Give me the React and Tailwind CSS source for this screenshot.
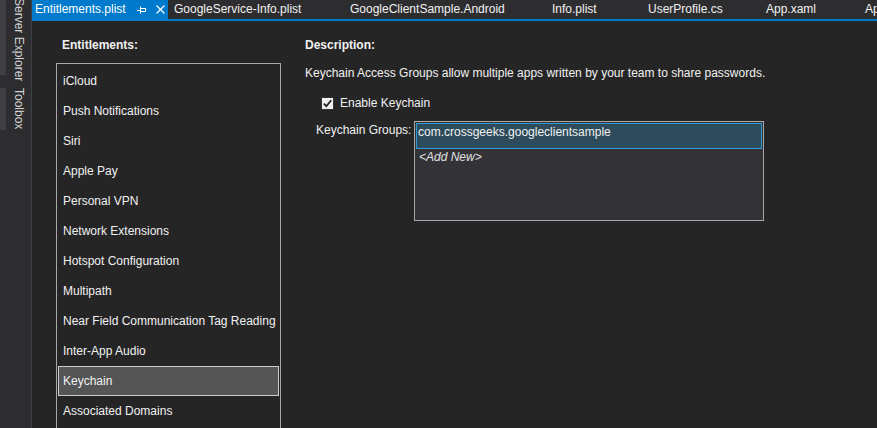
import React from 'react'

const tabs = [
  { name: 'GoogleService-Info.plist', w: 'w-[176px]' },
  { name: 'GoogleClientSample.Android', w: 'w-[202px]' },
  { name: 'Info.plist', w: 'w-[96px]' },
  { name: 'UserProfile.cs', w: 'w-[118px]' },
  { name: 'App.xaml', w: 'w-[99px]' },
  { name: 'App.xaml.cs', w: 'w-[90px]' },
]

const entitlements = [
  'iCloud',
  'Push Notifications',
  'Siri',
  'Apple Pay',
  'Personal VPN',
  'Network Extensions',
  'Hotspot Configuration',
  'Multipath',
  'Near Field Communication Tag Reading',
  'Inter-App Audio',
  'Keychain',
  'Associated Domains',
]

function PinIcon() {
  return (
    <svg width="10" height="8" viewBox="0 0 10 8" fill="none" stroke="#ffffff" strokeWidth="1">
      <path d="M0 4.5H3" />
      <path d="M3.5 0.5V7.5" />
      <rect x="3.5" y="2.5" width="5" height="3" />
      <path d="M4 2.5H9" />
    </svg>
  )
}

function CloseIcon() {
  return (
    <svg width="9" height="9" viewBox="0 0 9 9" fill="none" stroke="#ffffff" strokeWidth="1.2">
      <path d="M0.5 0.5L8.5 8.5M8.5 0.5L0.5 8.5" />
    </svg>
  )
}

function SideTab({ label, className }) {
  return (
    <div className={`flex ${className}`}>
      <div className="w-[6px] bg-[#3f3f46]" />
      <div className="ml-[6px] [writing-mode:vertical-rl] text-[12px] leading-[14px] text-[#d4d4d4] whitespace-nowrap">
        {label}
      </div>
    </div>
  )
}

export default function App() {
  return (
    <div
      className="flex h-[428px] w-[877px] overflow-hidden bg-[#252526] text-[#f1f1f1] text-[12px]"
      style={{ fontFamily: '"Liberation Sans", Arial, sans-serif' }}
    >
      {/* Auto-hide side tabs */}
      <div className="w-[32px] shrink-0 bg-[#2d2d30] border-r border-[#3f3f46] flex flex-col overflow-hidden">
        <SideTab label="Server Explorer" className="h-[77px] -mt-[2px]" />
        <SideTab label="Toolbox" className="h-[42px] mt-[13px]" />
      </div>

      <div className="flex-1 flex flex-col min-w-0">
        {/* Document tabs */}
        <div className="h-[21px] shrink-0 bg-[#2d2d30] border-b-2 border-[#007acc] flex items-stretch overflow-hidden whitespace-nowrap">
          <div className="w-[136px] shrink-0 bg-[#007acc] text-white flex items-center pl-[3px]">
            <span className="leading-[19px]">Entitlements.plist</span>
            <span className="ml-[11px] flex items-center"><PinIcon /></span>
            <span className="ml-[9px] flex items-center"><CloseIcon /></span>
          </div>
          {tabs.map(t => (
            <div key={t.name} className={`${t.w} shrink-0 flex items-center pl-[6px] text-[#f1f1f1]`}>
              <span className="leading-[19px]">{t.name}</span>
            </div>
          ))}
        </div>

        {/* Editor content */}
        <div className="flex-1 flex pl-[24px] min-h-0 overflow-hidden">
          {/* Entitlements list */}
          <div className="w-[225px] shrink-0">
            <div className="mt-[16px] h-[16px] leading-[16px] pl-[6px] font-bold">Entitlements:</div>
            <div className="mt-[10px] border border-[#a8a8a8] px-[1px] pt-[2px] pb-[8px]">
              {entitlements.map(item => {
                const selected = item === 'Keychain'
                return (
                  <div
                    key={item}
                    className={`h-[30px] flex items-center pl-[4px] border whitespace-nowrap ${
                      selected ? 'bg-[#555555] border-[#cccccc]' : 'border-transparent'
                    }`}
                  >
                    {item}
                  </div>
                )
              })}
            </div>
          </div>

          {/* Description panel */}
          <div className="ml-[24px] flex-1 min-w-0">
            <div className="mt-[16px] h-[16px] leading-[16px] font-bold">Description:</div>
            <div className="mt-[12px] h-[16px] leading-[16px] whitespace-nowrap">
              Keychain Access Groups allow multiple apps written by your team to share passwords.
            </div>
            <div className="mt-[14px] h-[16px] pl-[16px] flex items-center">
              <div className="w-[13px] h-[13px] bg-[#f0f0f0] border border-[#333333] flex items-center justify-center">
                <svg width="11" height="11" viewBox="0 0 11 11" fill="none" stroke="#1e1e1e" strokeWidth="1.8">
                  <path d="M1.8 5.6L4.3 8.2L9.2 2.2" />
                </svg>
              </div>
              <span className="ml-[6px] leading-[16px]">Enable Keychain</span>
            </div>
            <div className="mt-[10px] flex pl-[11px]">
              <div className="w-[98px] shrink-0 mt-[1px] h-[16px] leading-[16px] whitespace-nowrap">Keychain Groups:</div>
              <div className="w-[350px] h-[100px] border border-[#a8a8a8] bg-[#333337] p-[1px]">
                <div className="h-[26px] border border-[#3399d6] bg-[#2e4b5b] pl-[1px] leading-[16px] whitespace-nowrap">
                  com.crossgeeks.googleclientsample
                </div>
                <div className="pl-[3px] leading-[16px] italic text-[#e0e0e0]">&lt;Add New&gt;</div>
              </div>
            </div>
          </div>
        </div>
      </div>
    </div>
  )
}
